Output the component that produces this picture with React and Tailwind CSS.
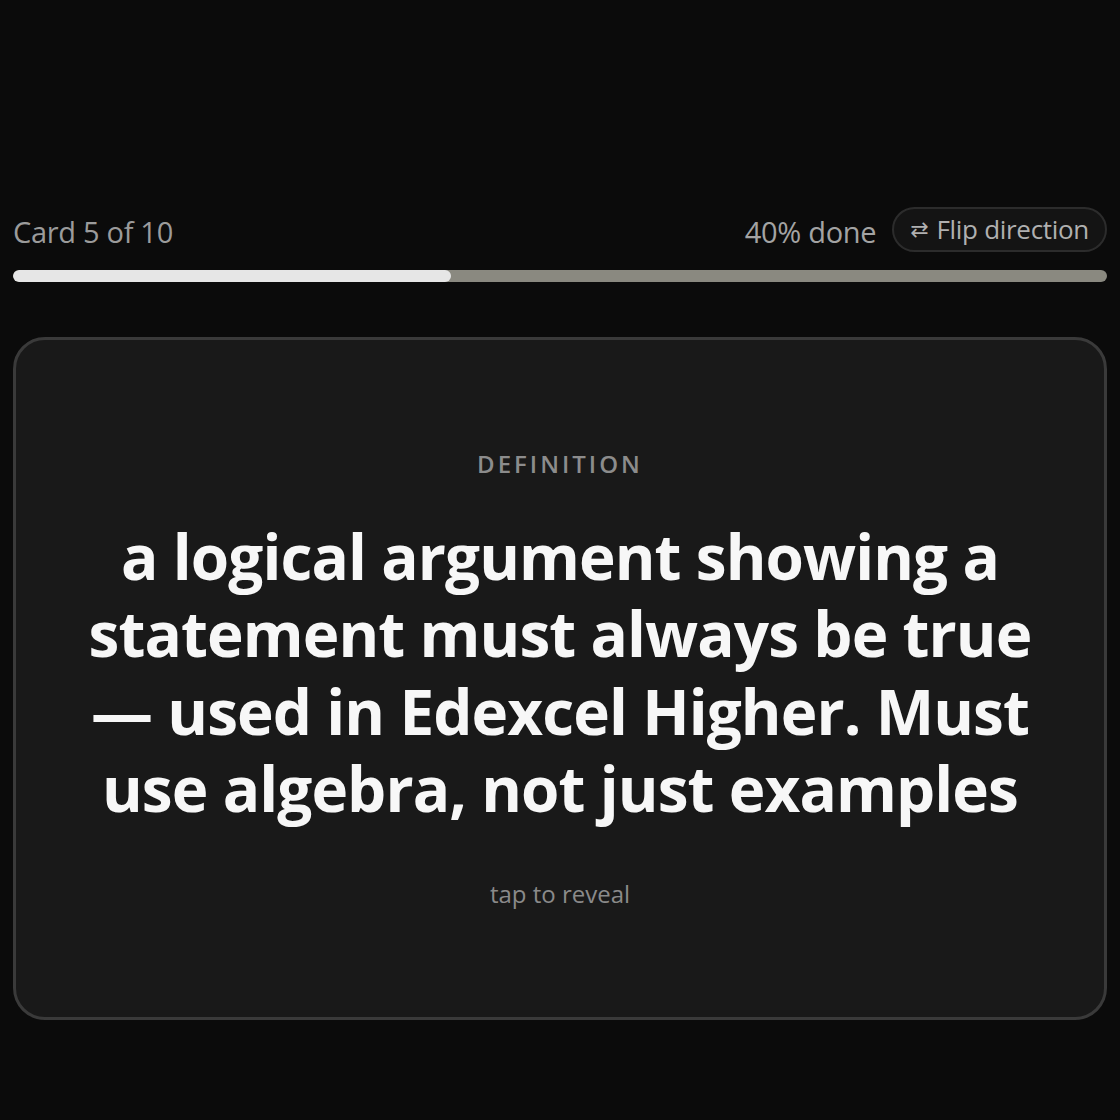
import React from 'react';

export default function App() {
  const done = 40;
  return (
    <div className="min-h-[1120px] bg-[#0b0b0b] px-[13px] pt-[207px] font-['Open_Sans','Noto_Sans',sans-serif]">
      {/* Header */}
      <div className="flex items-center justify-between h-[45px]">
        <span className="mt-[4px] text-[29px] text-[#9b9b9b] tracking-[-0.3px]">Card 5 of 10</span>
        <div className="flex items-center gap-[16px]">
          <span className="mt-[4px] text-[29px] text-[#a3a3a3] tracking-[-0.3px]">{done}% done</span>
          <button className="flex items-center gap-[8px] h-[45px] px-[16px] rounded-full border-2 border-[#2c2c2c] bg-[#141414] text-[26px] text-[#b0b0b0] tracking-[-0.3px]">
            <span className="text-[22px] font-['DejaVu_Sans',sans-serif]">⇄</span>
            <span>Flip direction</span>
          </button>
        </div>
      </div>

      {/* Progress */}
      <div className="mt-[18px] h-[12px] rounded-full bg-[#8a8980] overflow-hidden">
        <div className="h-full rounded-full bg-[#e6e6e6]" style={{ width: `${done}%` }} />
      </div>

      {/* Card */}
      <div className="mt-[55px] h-[683px] rounded-[32px] border-[3px] border-[#3a3a3a] bg-[#191919] flex flex-col items-center justify-center px-[60px] text-center">
        <div className="text-[24px] font-semibold tracking-[3px] text-[#8c8c8c]">DEFINITION</div>
        <div className="mt-[36px] text-[62px] leading-[77.5px] font-bold text-[#f7f7f7] tracking-[-0.9px]">
          a logical argument showing a statement must always be true — used in Edexcel Higher. Must use algebra, not just examples
        </div>
        <div className="mt-[48px] text-[24px] text-[#8a8a8a]">tap to reveal</div>
      </div>
    </div>
  );
}
